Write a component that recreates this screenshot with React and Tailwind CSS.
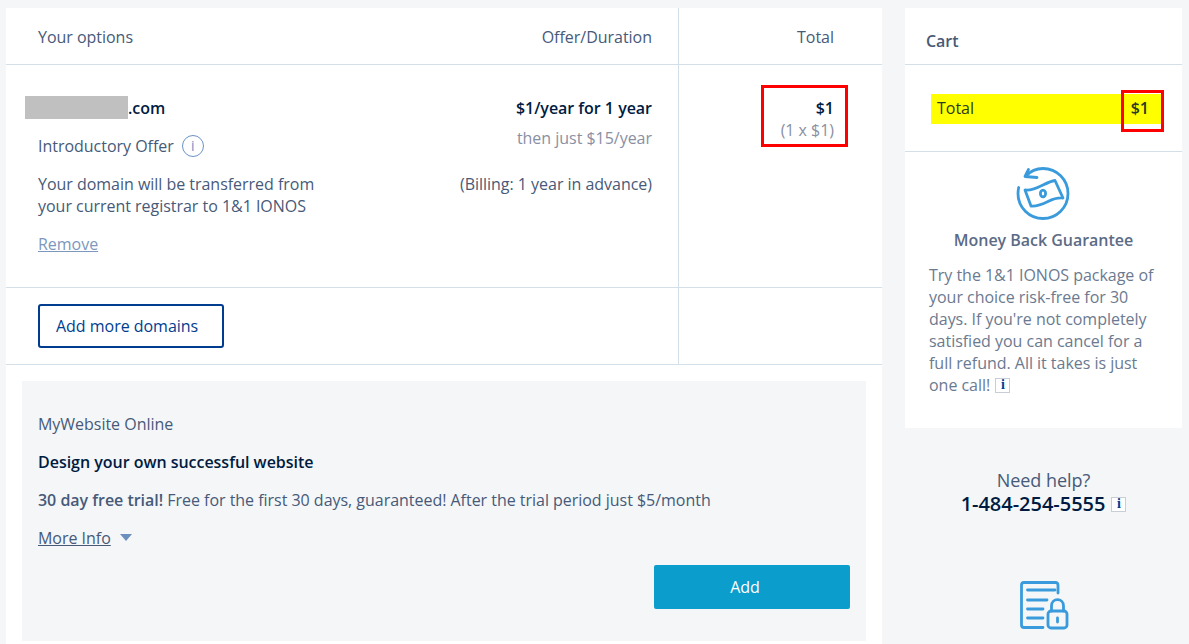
import React from 'react'

function SmallInfo() {
  return (
    <span className="ml-[1px] inline-flex h-[15px] w-[15px] items-center justify-center border border-[#c9ced6] bg-white align-[2px] font-['Liberation_Serif',serif] text-[14px] font-bold leading-none text-[#003d8f]">i</span>
  )
}

function MoneyIcon() {
  return (
    <svg width="54" height="54" viewBox="0 0 54 54" fill="none" stroke="#3a9bdc" strokeWidth="2.8" strokeLinecap="round" strokeLinejoin="round">
      <path d="M10 9C14.500 4 20.500 1.500 27 1.500C40.800 1.500 52 12.700 52 26.500C52 40.300 40.800 51.500 27 51.500C13.200 51.500 2 40.300 2 26.500C2 24.500 2.200 22.500 2.700 20.500" />
      <path d="M12.500 2.500L9 9.500L21 10.500" />
      <path d="M9 23C15 24 21 21 27 18C31 16 35 14 39 13.500L47 31C42 30.500 37 32 32 34.500C26 37.500 21 39.500 15 39Z" />
      <ellipse cx="27" cy="26.500" rx="2.600" ry="3.400" />
    </svg>
  )
}

function ContractIcon() {
  return (
    <svg width="50" height="50" viewBox="-1 0 50 50" fill="none" stroke="#3a9bdc" strokeWidth="2.8" strokeLinecap="round" strokeLinejoin="round">
      <path d="M38 12V4C38 2 37 1.500 35.500 1.500H4C2 1.500 1.500 2.500 1.500 4V44C1.500 46 2.500 46.500 4 46.500H23" />
      <path d="M7.500 9H35M7.500 19H27M7.500 28H23M7.500 37H23" />
      <rect x="28" y="30" width="19" height="17" rx="3" />
      <path d="M31.500 30V25C31.500 16.500 43.500 16.500 43.500 25V30" />
      <path d="M37.500 37V41" />
    </svg>
  )
}

export default function App() {
  return (
    <div className="h-[644px] overflow-hidden bg-[#f4f6f8] font-['Open_Sans',sans-serif] text-[16px] tracking-[-0.025px] text-[#475a78]">
      <div className="flex items-start pt-2 pl-[6px]">
        {/* main panel */}
        <div className="h-[636px] w-[876px] bg-white">
          {/* header */}
          <div className="grid h-[57px] grid-cols-[673px_203px] border-b border-[#d3e0ea]">
            <div className="flex items-center justify-between border-r border-[#d3e0ea] pt-[1px] pr-[26px] pl-8">
              <span>Your options</span>
              <span>Offer/Duration</span>
            </div>
            <div className="flex items-center justify-end pt-[1px] pr-[48px]">Total</div>
          </div>

          {/* domain row */}
          <div className="grid h-[223px] grid-cols-[673px_203px] border-b border-[#d3e0ea]">
            <div className="relative flex justify-between border-r border-[#d3e0ea] pr-[26px] pl-8">
              <div>
                <div className="mt-[31px] -ml-[13px] flex h-[23px] items-center">
                  <span className="h-[23px] w-[103px] bg-[#c0c0c0]"></span>
                  <span className="font-semibold text-[#001b41]">.com</span>
                </div>
                <div className="mt-4 flex h-[22px] items-center gap-[8px]">
                  Introductory Offer
                  <span className="flex h-[22px] w-[22px] items-center justify-center rounded-full border border-[#6b93c7] text-[14px] leading-none text-[#6b93c7]">i</span>
                </div>
                <p className="mt-4 leading-[22px]">Your domain will be transferred from<br />your current registrar to 1&amp;1 IONOS</p>
                <a className="mt-4 block w-fit leading-[22px] text-[#7d97bd] underline">Remove</a>
              </div>
              <div className="text-right">
                <p className="mt-[32px] leading-[22px] font-semibold text-[#001b41]">$1/year for 1 year</p>
                <p className="mt-2 leading-[22px] text-[#8a8fa3]">then just $15/year</p>
                <p className="mt-6 leading-[22px]">(Billing: 1 year in advance)</p>
              </div>
            </div>
            <div className="relative pt-[32px] pr-[48px] text-right">
              <p className="leading-[22px] font-semibold text-[#001b41]">$1</p>
              <p className="leading-[22px] text-[#8a8fa3]">(1 x $1)</p>
              <span className="absolute top-[20px] right-[34px] h-[62px] w-[87px] border-[3px] border-[#ff0000]"></span>
            </div>
          </div>

          {/* add more row */}
          <div className="grid h-[77px] grid-cols-[673px_203px] border-b border-[#d3e0ea]">
            <div className="flex items-start border-r border-[#d3e0ea] pt-4 pl-8">
              <button className="h-[44px] w-[186px] rounded-[3px] border-2 border-[#003d8f] pb-[1px] pl-4 text-left text-[#003d8f]">Add more domains</button>
            </div>
            <div></div>
          </div>

          {/* promo */}
          <div className="mx-4 mt-4 h-[260px] bg-[#f4f6f8] px-4 pt-[32px]">
            <p className="leading-[22px]">MyWebsite Online</p>
            <p className="mt-4 leading-[22px] font-semibold text-[#001b41]">Design your own successful website</p>
            <p className="mt-4 leading-[22px]"><span className="font-semibold">30 day free trial!</span> Free for the first 30 days, guaranteed! After the trial period just $5/month</p>
            <div className="mt-4 flex items-center gap-[9px]">
              <a className="leading-[22px] underline">More Info</a>
              <span className="mb-[2px] h-0 w-0 border-x-[6px] border-t-[7px] border-x-transparent border-t-[#6b8fbf]"></span>
            </div>
            <div className="mt-[16px] flex justify-end">
              <button className="h-[44px] w-[196px] rounded-[2px] bg-[#0b9dcc] pr-[14px] text-white">Add</button>
            </div>
          </div>
        </div>

        {/* sidebar */}
        <div className="ml-[23px] w-[277px]">
          <div className="bg-white">
            <div className="flex h-[57px] items-center border-b border-[#d3e0ea] pt-[9px] pl-[21px] font-semibold">Cart</div>
            <div className="h-[87px] border-b border-[#d3e0ea] pt-[29px] pl-[26px]">
              <div className="relative flex h-[30px] w-[230px] items-center justify-between bg-[#ffff00] pr-[12px] pb-[2px] pl-[6px] text-[#2b3a20]">
                <span>Total</span>
                <span className="font-semibold">$1</span>
                <span className="absolute -top-[4px] -right-[3px] h-[42px] w-[43px] border-[3px] border-[#ff0000]"></span>
              </div>
            </div>
            <div className="h-[276px] pt-[15px]">
              <div className="flex justify-center pr-[1px]"><MoneyIcon /></div>
              <p className="mt-2 text-center leading-[22px] font-semibold text-[#5c6b85]">Money Back Guarantee</p>
              <p className="mt-[13px] pr-4 pl-6 leading-[22px] text-[#6b7a90]">Try the 1&amp;1 IONOS package of your choice risk-free for 30 days. If you're not completely satisfied you can cancel for a full refund. All it takes is just one call! <SmallInfo /></p>
            </div>
          </div>
          <div className="mt-10 text-center">
            <p className="text-[18px] leading-[24px]">Need help?</p>
            <p className="flex items-center justify-center gap-[5px] text-[20px] leading-[24px] font-semibold text-[#001b41]">1-484-254-5555 <SmallInfo /></p>
          </div>
          <div className="mt-[65px] flex justify-center pl-[1px]"><ContractIcon /></div>
        </div>
      </div>
    </div>
  )
}
